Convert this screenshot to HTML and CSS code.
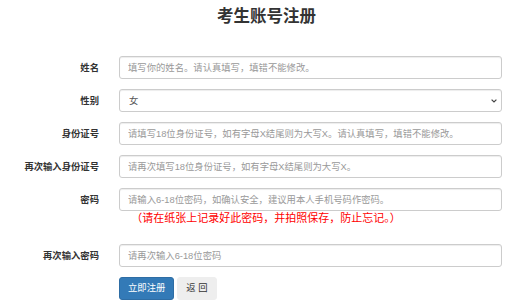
FILE: index.html
```html
<!DOCTYPE html>
<html lang="zh-CN">
<head>
    <meta charset="UTF-8">
    <meta name="viewport" content="width=device-width, initial-scale=1.0">
    <title>考生账号注册</title>
    <link rel="stylesheet" href="styles.css">
</head>
<body>
    <div class="container">
        <h3 class="page-title">考生账号注册</h3>
        <form class="reg-form">
            <div class="form-row">
                <label class="form-label" for="name">姓名</label>
                <input id="name" class="form-input" type="text" placeholder="填写你的姓名。请认真填写，填错不能修改。">
            </div>
            <div class="form-row">
                <label class="form-label" for="sex">性别</label>
                <div class="select-wrap">
                    <select id="sex" class="form-input">
                        <option>女</option>
                        <option>男</option>
                    </select>
                    <svg class="select-arrow" width="6" height="4" viewBox="0 0 6 4">
                        <path d="M0.6 0.6 L3 3 L5.4 0.6" fill="none" stroke="#444" stroke-width="1.2"/>
                    </svg>
                </div>
            </div>
            <div class="form-row">
                <label class="form-label" for="idcard">身份证号</label>
                <input id="idcard" class="form-input" type="text" placeholder="请填写18位身份证号，如有字母X结尾则为大写X。请认真填写，填错不能修改。">
            </div>
            <div class="form-row">
                <label class="form-label" for="idcard2">再次输入身份证号</label>
                <input id="idcard2" class="form-input" type="text" placeholder="请再次填写18位身份证号，如有字母X结尾则为大写X。">
            </div>
            <div class="form-row form-row-tight">
                <label class="form-label" for="pwd">密码</label>
                <input id="pwd" class="form-input" type="password" placeholder="请输入6-18位密码，如确认安全，建议用本人手机号码作密码。">
            </div>
            <p class="pwd-tip">（请在纸张上记录好此密码，并拍照保存，防止忘记。）</p>
            <div class="form-row">
                <label class="form-label" for="pwd2">再次输入密码</label>
                <input id="pwd2" class="form-input" type="password" placeholder="请再次输入6-18位密码">
            </div>
            <div class="form-row">
                <span class="form-label"></span>
                <div class="btn-group">
                    <button type="button" class="btn btn-primary">立即注册</button>
                    <button type="button" class="btn btn-default">返 回</button>
                </div>
            </div>
        </form>
    </div>
</body>
</html>
```

FILE: styles.css
```css
body {
    margin: 0;
    padding: 0;
    background: #fff;
    color: #333;
    font-family: "Liberation Sans", "Noto Sans CJK SC", sans-serif;
    font-size: 9.33px;
}

.container {
    width: 530px;
}

.page-title {
    margin: 4px 0 0 3px;
    height: 24px;
    line-height: 24px;
    font-size: 16.5px;
    font-weight: bold;
    text-align: center;
    color: #333;
}

.reg-form {
    margin-top: 28px;
}

.form-row {
    display: flex;
    align-items: center;
    height: 23px;
    margin-bottom: 10px;
}

.form-row-tight {
    margin-bottom: 0;
}

.form-label {
    width: 99px;
    flex: none;
    margin-right: 20px;
    text-align: right;
    font-weight: bold;
    line-height: 14px;
}

.form-input {
    box-sizing: border-box;
    width: 383px;
    height: 23px;
    margin: 0;
    padding: 0 8px;
    border: 1px solid #ccc;
    border-radius: 3px;
    background: #fff;
    color: #555;
    font-family: inherit;
    font-size: 9.33px;
    box-shadow: inset 0 1px 1px rgba(0, 0, 0, 0.075);
    outline: none;
}

.form-input::placeholder {
    color: #999;
}

.select-wrap {
    position: relative;
    width: 383px;
    height: 23px;
}

select.form-input {
    -webkit-appearance: none;
    appearance: none;
    padding-left: 9px;
}

.select-arrow {
    position: absolute;
    right: 5px;
    top: 9.5px;
}

.pwd-tip {
    margin: 1px 0 20px 2px;
    height: 12px;
    line-height: 12px;
    font-size: 11px;
    color: #f00;
    text-align: center;
}

.btn-group {
    display: flex;
    gap: 3px;
}

.btn {
    box-sizing: border-box;
    height: 23px;
    padding: 0 8px;
    border: 1px solid transparent;
    border-radius: 3px;
    font-family: inherit;
    font-size: 9.33px;
    line-height: 21px;
    cursor: pointer;
}

.btn-primary {
    background: #337ab7;
    border-color: #2e6da4;
    color: #fff;
}

.btn-default {
    background: #eee;
    border-color: #eee;
    color: #333;
}
```
